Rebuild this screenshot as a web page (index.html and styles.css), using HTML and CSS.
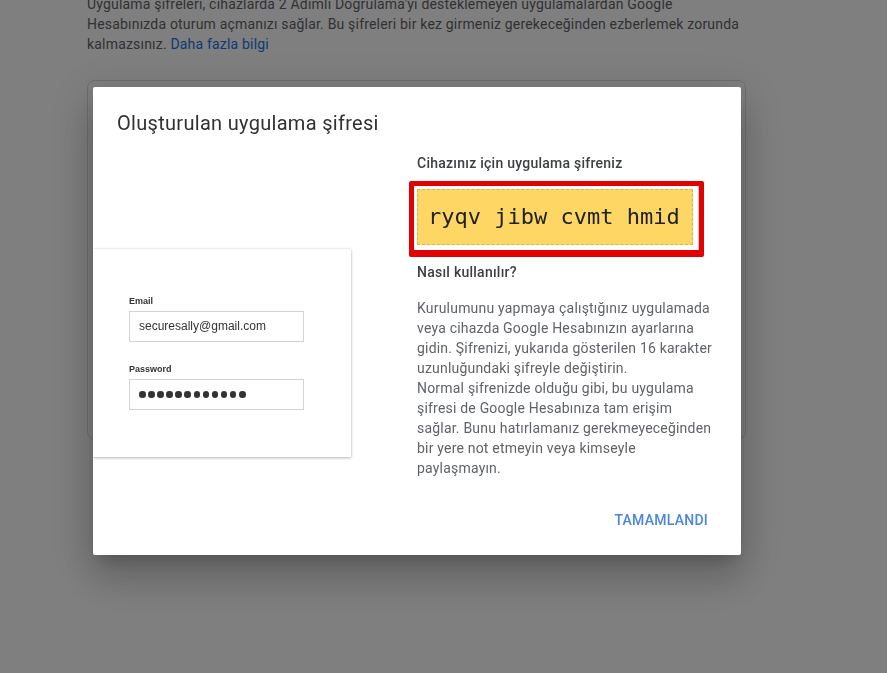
FILE: index.html
```html
<!DOCTYPE html>
<html lang="tr">
<head>
<meta charset="utf-8">
<title>Uygulama şifresi</title>
<link rel="stylesheet" href="styles.css">
</head>
<body>
<main class="page">
  <p class="intro">Uygulama şifreleri, cihazlarda 2 Adımlı Doğrulama'yı desteklemeyen uygulamalardan Google<br>Hesabınızda oturum açmanızı sağlar. Bu şifreleri bir kez girmeniz gerekeceğinden ezberlemek zorunda<br>kalmazsınız. <a class="link" href="#">Daha fazla bilgi</a></p>
  <section class="card"></section>
</main>
<div class="scrim"></div>
<div class="dialog" role="dialog">
  <h1 class="dialog-title">Oluşturulan uygulama şifresi</h1>
  <div class="dialog-body">
    <div class="illustration">
      <div class="login-card">
        <div class="field-label">Email</div>
        <div class="field">securesally@gmail.com</div>
        <div class="field-label second">Password</div>
        <div class="field dots">
          <span class="dot"></span><span class="dot"></span><span class="dot"></span><span class="dot"></span><span class="dot"></span><span class="dot"></span><span class="dot"></span><span class="dot"></span><span class="dot"></span><span class="dot"></span><span class="dot"></span><span class="dot"></span>
        </div>
      </div>
    </div>
    <div class="info">
      <h2 class="info-heading">Cihazınız için uygulama şifreniz</h2>
      <div class="highlight">
        <div class="highlight-inner">
          <div class="password">ryqv jibw cvmt hmid</div>
        </div>
      </div>
      <h2 class="info-heading how">Nasıl kullanılır?</h2>
      <p class="info-text">Kurulumunu yapmaya çalıştığınız uygulamada<br>veya cihazda Google Hesabınızın ayarlarına<br>gidin. Şifrenizi, yukarıda gösterilen 16 karakter<br>uzunluğundaki şifreyle değiştirin.<br>Normal şifrenizde olduğu gibi, bu uygulama<br>şifresi de Google Hesabınıza tam erişim<br>sağlar. Bunu hatırlamanız gerekmeyeceğinden<br>bir yere not etmeyin veya kimseyle<br>paylaşmayın.</p>
    </div>
  </div>
  <div class="dialog-actions">
    <button class="btn-text" type="button">TAMAMLANDI</button>
  </div>
</div>
</body>
</html>
```
FILE: styles.css
```css
* { box-sizing: border-box; }

html, body {
  margin: 0;
  padding: 0;
  background: #ffffff;
  height: 100%;
  overflow: hidden;
}

body {
  font-family: Roboto, "Noto Sans", Arial, sans-serif;
}

.page {
  padding-left: 87px;
}

.intro {
  margin: -6px 0 0;
  font-size: 14px;
  line-height: 20px;
  color: #5f6368;
  letter-spacing: 0.19px;
  white-space: nowrap;
}

.link {
  color: #1a73e8;
  text-decoration: none;
}

.card {
  margin-top: 26px;
  width: 659px;
  height: 360px;
  border: 1px solid #dadce0;
  border-radius: 8px;
}

.scrim {
  position: fixed;
  inset: 0;
  background: rgba(0, 0, 0, 0.5);
}

.dialog {
  position: fixed;
  left: 93px;
  top: 87px;
  width: 648px;
  height: 468px;
  background: #ffffff;
  border-radius: 2px;
  overflow: hidden;
  padding-top: 24px;
  box-shadow: 0 11px 15px -7px rgba(0,0,0,.2), 0 24px 38px 3px rgba(0,0,0,.14), 0 9px 46px 8px rgba(0,0,0,.12);
}

.dialog-title {
  margin: 0 0 18px 24px;
  font-size: 20px;
  line-height: 24px;
  font-weight: 400;
  letter-spacing: 0.3px;
  color: #303134;
}

.dialog-body {
  display: flex;
}

.illustration {
  width: 258px;
  padding-top: 96px;
  flex: none;
}

.login-card {
  background: #ffffff;
  height: 208px;
  padding: 47px 0 0 36px;
  box-shadow: 0 1px 3px rgba(0,0,0,.28), 0 0 1px rgba(0,0,0,.15);
  font-family: "Liberation Sans", Arial, sans-serif;
}

.field-label {
  font-size: 9px;
  line-height: 11px;
  font-weight: 700;
  color: #333333;
  margin-bottom: 4px;
}

.field-label.second {
  margin-top: 22px;
}

.field {
  width: 175px;
  height: 31px;
  border: 1px solid #d3d3d3;
  padding: 0 9px;
  font-size: 12px;
  line-height: 29px;
  color: #333333;
}

.dots {
  display: flex;
  align-items: center;
  gap: 2.6px;
}

.dot {
  width: 6.5px;
  height: 6.5px;
  border-radius: 50%;
  background: #333333;
}

.info {
  margin-left: 66px;
  width: 300px;
  flex: none;
}

.info-heading {
  margin: 0;
  font-size: 14px;
  line-height: 20px;
  font-weight: 500;
  letter-spacing: 0.25px;
  color: #3c4043;
}

.highlight {
  margin: 8px 0 0 -8px;
  width: 295px;
  border: 5px solid #e30000;
  border-bottom-width: 7px;
  border-radius: 2px;
}

.highlight-inner {
  padding: 3px 5px 5px 3px;
  border-right: 1px solid #c9c9c9;
}

.password {
  height: 56px;
  background: #fdd663;
  border: 1px dashed #dcb44c;
  padding-left: 10px;
  font-family: "DejaVu Sans Mono", "Liberation Mono", monospace;
  font-size: 22px;
  line-height: 54px;
  color: #202124;
  white-space: nowrap;
}

.info-heading.how {
  margin-top: 5px;
}

.info-text {
  margin: 16px 0 0;
  font-size: 14px;
  line-height: 20px;
  letter-spacing: 0.2px;
  color: #5f6368;
  white-space: nowrap;
}

.dialog-actions {
  display: flex;
  justify-content: flex-end;
  padding: 24px 25px 0 0;
}

.btn-text {
  height: 36px;
  padding: 0 8px;
  border: none;
  background: transparent;
  font-family: Roboto, Arial, sans-serif;
  font-size: 14px;
  font-weight: 500;
  letter-spacing: 0.25px;
  color: #4a86de;
  cursor: pointer;
}
```
